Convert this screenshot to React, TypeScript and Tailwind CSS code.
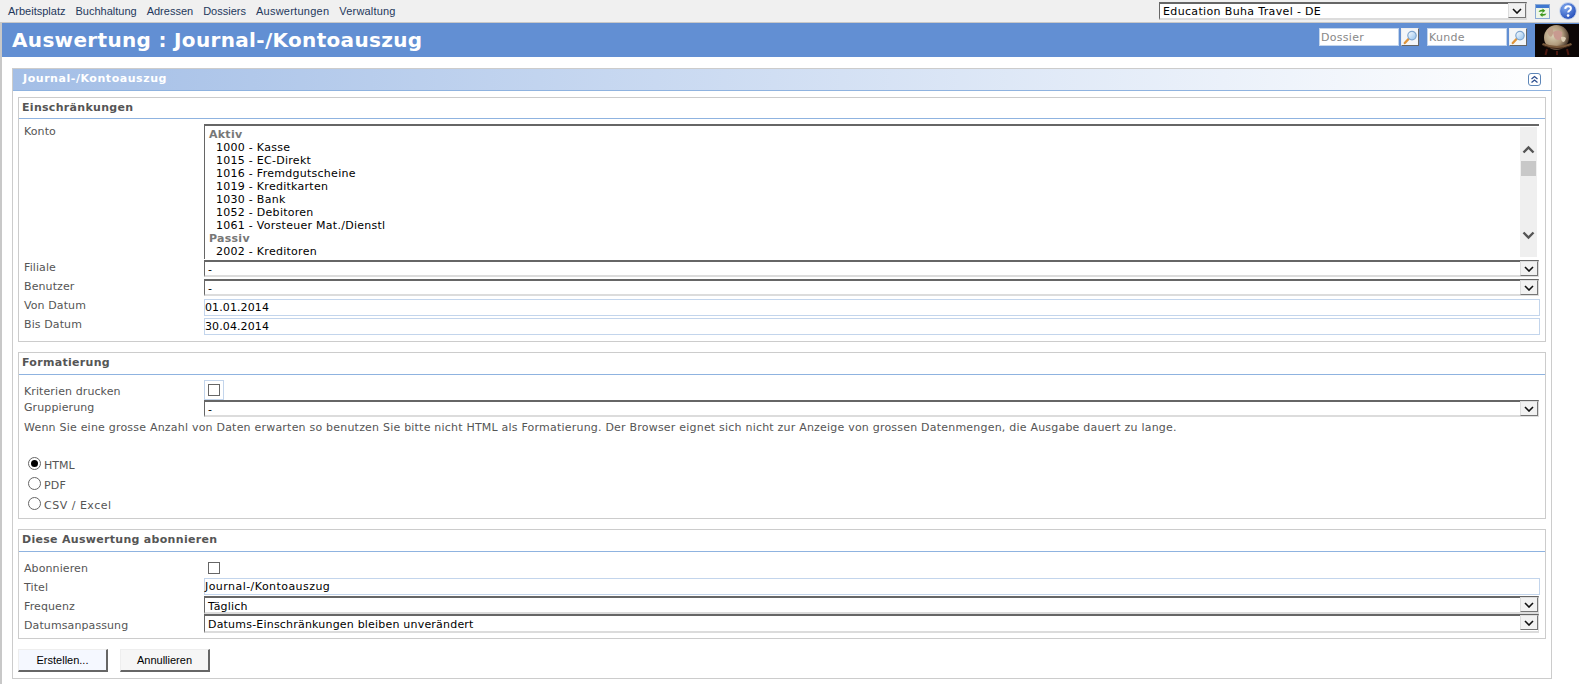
import React from "react";

const V = "font-['DejaVu_Sans','Liberation_Sans',sans-serif]";

function Chev() {
  return (
    <svg width="10" height="6" viewBox="0 0 10 6" className="block">
      <path d="M1 1 L5 5 L9 1" fill="none" stroke="#111" strokeWidth="1.6" />
    </svg>
  );
}

function Select({ value, h = "h-[17px]", w = "w-[1335px]", text = "tracking-[0.2px]", pt = "pt-[1px]" }: { value: string; h?: string; w?: string; text?: string; pt?: string }) {
  return (
    <div className={`${h} ${w} flex bg-white border-t-2 border-l border-b-2 border-r border-t-[#666] border-l-[#666] border-b-[#dcdcdc] border-r-[#dcdcdc] text-[11px] leading-[13px] text-black ${text}`}>
      <div className={`flex-1 pl-[3px] ${pt} overflow-hidden whitespace-nowrap`}>{value}</div>
      <div className="w-[18px] h-[15px] -mt-[1px] flex items-center justify-center bg-[#f2f2f2] border border-[#777] border-t-[#ddd] border-l-[#ddd]">
        <Chev />
      </div>
    </div>
  );
}

function TextInput({ value, text = "tracking-[0.1px]" }: { value: string; text?: string }) {
  return (
    <div className={`h-[17px] w-[1336px] border border-[#c3d5ec] bg-white text-[11px] leading-[15px] text-black whitespace-nowrap ${text}`}>
      {value}
    </div>
  );
}

function Row({ label, h, pt = "pt-0", children }: { label: string; h: string; pt?: string; children: React.ReactNode }) {
  return (
    <div className={`flex ${h}`}>
      <div className={`w-[185px] pl-[5px] ${pt} text-[11px] leading-[15px] text-[#555] tracking-[0.1px] whitespace-nowrap`}>{label}</div>
      <div className="flex flex-col">{children}</div>
    </div>
  );
}

function Fieldset({ title, head, className, children }: { title: string; head: string; className?: string; children: React.ReactNode }) {
  return (
    <section className={`w-[1528px] border border-[#cccccc] ${className ?? ""}`}>
      <div className={`${head} pl-[3px] border-b border-[#8fb3e0] flex items-center text-[11px] font-bold text-[#555] tracking-[0.3px] whitespace-nowrap`}>{title}</div>
      {children}
    </section>
  );
}

function Check() {
  return <span className="block w-[12px] h-[12px] bg-white border border-[#666]" />;
}

function Radio({ label, checked, text = "" }: { label: string; checked?: boolean; text?: string }) {
  return (
    <div className={`h-[20px] flex items-center pl-[9px] text-[11px] text-[#555] ${text}`}>
      <span className="w-[13px] h-[13px] mb-[5px] rounded-full border border-[#666] bg-white flex items-center justify-center mr-[3px]">
        {checked && <span className="w-[7px] h-[7px] rounded-full bg-black" />}
      </span>
      {label}
    </div>
  );
}

function Magnifier() {
  return (
    <svg width="15" height="15" viewBox="0 0 15 15">
      <defs>
        <linearGradient id="lens" x1="0" y1="0" x2="1" y2="1">
          <stop offset="0" stopColor="#ffffff" />
          <stop offset="1" stopColor="#8fc0ee" />
        </linearGradient>
      </defs>
      <path d="M5.5 9 L1.8 13" stroke="#e0953a" strokeWidth="2.4" strokeLinecap="round" />
      <circle cx="9" cy="5.6" r="4.2" fill="url(#lens)" stroke="#7fa6cf" strokeWidth="1.2" />
    </svg>
  );
}

function SearchBox({ placeholder }: { placeholder: string }) {
  return (
    <div className="flex items-start gap-[2px]">
      <input
        readOnly
        placeholder={placeholder}
        className="w-[80px] h-[18px] bg-white border border-[#c3d5ec] pl-[1px] text-[11px] tracking-[0.3px] outline-none placeholder:text-[#888] placeholder:opacity-100"
      />
      <div className="w-[18px] h-[18px] flex items-center justify-center bg-[#f4f6f8] border border-[#eee] border-r-[#666] border-b-[#666]">
        <Magnifier />
      </div>
    </div>
  );
}

function Globe() {
  return (
    <svg width="44" height="33" viewBox="0 0 44 33" className="block">
      <defs>
        <radialGradient id="gl" cx="0.36" cy="0.42" r="0.72">
          <stop offset="0" stopColor="#d9d0b4" />
          <stop offset="0.55" stopColor="#b09a7c" />
          <stop offset="1" stopColor="#2c1c14" />
        </radialGradient>
      </defs>
      <rect width="44" height="33" fill="#0c0605" />
      <circle cx="21.5" cy="13.5" r="12.5" fill="url(#gl)" />
      <path d="M12 6 q4 -3 6 -1 q1 4 -1 7 q-3 3 -5 -6z" fill="#bfa08a" />
      <path d="M18 8 q5 -3 9 0 q1 5 -3 8 q-5 1 -6 -8z" fill="#c89a90" />
      <path d="M26 13 q3 -1 5 1 q-1 4 -3 4 q-2 -1 -2 -5z" fill="#ddcdb4" />
      <path d="M8 19 q14 6 28 0 l1 2 q-15 7 -30 0z" fill="#7a5a3c" />
      <path d="M9 22 q13 5 26 0" fill="none" stroke="#3a2216" strokeWidth="1" />
      <path d="M12 25 L10.5 31 M32 25 L33.5 31 M22 27 L22 31" stroke="#4c170f" strokeWidth="2" />
    </svg>
  );
}

function Refresh() {
  return (
    <svg width="15" height="15" viewBox="0 0 15 15" className="block">
      <rect x="0.5" y="0.5" width="14" height="14" fill="#eef6e8" stroke="#8aa9d4" />
      <rect x="1" y="1" width="13" height="3" fill="#3f78d0" />
      <path d="M3.5 8 q1 -2.6 4 -2.2 l0 -1.3 l2.8 2.2 l-2.8 2.2 l0 -1.3 q-2 -0.2 -4 0.4z" fill="#3f9a1f" />
      <path d="M11.5 9.5 q-1 2.6 -4 2.2 l0 1.3 l-2.8 -2.2 l2.8 -2.2 l0 1.3 q2 0.2 4 -0.4z" fill="#3f9a1f" />
    </svg>
  );
}

function Help() {
  return (
    <svg width="18" height="18" viewBox="0 0 18 18" className="block">
      <defs>
        <radialGradient id="hp" cx="0.35" cy="0.3" r="0.8">
          <stop offset="0" stopColor="#7fa8ee" />
          <stop offset="1" stopColor="#1c45b4" />
        </radialGradient>
      </defs>
      <circle cx="9" cy="9" r="8.4" fill="url(#hp)" stroke="#d5dff0" />
      <path d="M6.2 6.8 q0.2 -2.6 2.9 -2.6 q2.8 0 2.8 2.3 q0 1.4 -1.5 2.2 q-1.2 0.7 -1.2 1.9" fill="none" stroke="#fff" strokeWidth="2" />
      <circle cx="9.1" cy="13.6" r="1.3" fill="#fff" />
    </svg>
  );
}

const accounts1 = [
  "1000 - Kasse",
  "1015 - EC-Direkt",
  "1016 - Fremdgutscheine",
  "1019 - Kreditkarten",
  "1030 - Bank",
  "1052 - Debitoren",
  "1061 - Vorsteuer Mat./Dienstl",
];

function KontoList() {
  return (
    <div className="h-[135px] w-[1335px] flex border-t-2 border-l border-t-[#666] border-l-[#666] bg-white">
      <div className="flex-1 overflow-hidden pl-[4px] pt-[2px] text-[11px] leading-[13px] text-black tracking-[0.27px] whitespace-nowrap">
        <div className="font-bold text-[#777]">Aktiv</div>
        {accounts1.map((a) => (
          <div key={a} className="pl-[7px]">{a}</div>
        ))}
        <div className="font-bold text-[#777]">Passiv</div>
        <div className="pl-[7px]">2002 - Kreditoren</div>
      </div>
      <div className="w-[17px] h-[130px] mt-[1px] mr-[2px] bg-[#efefef] flex flex-col items-center">
        <svg width="13" height="9" viewBox="0 0 13 9" className="mt-[18px] block">
          <path d="M1.5 7.5 L6.5 2.5 L11.5 7.5" fill="none" stroke="#555" strokeWidth="2.4" />
        </svg>
        <div className="w-[15px] h-[15px] mt-[7px] bg-[#c8c8c8]" />
        <svg width="13" height="9" viewBox="0 0 13 9" className="mt-[55px] block">
          <path d="M1.5 1.5 L6.5 6.5 L11.5 1.5" fill="none" stroke="#555" strokeWidth="2.4" />
        </svg>
      </div>
    </div>
  );
}

function Btn({ label, primary }: { label: string; primary?: boolean }) {
  return (
    <button className={`w-[90px] h-[23px] ${primary ? "bg-[#f5f8ff]" : "bg-[#f6f6f6]"} border border-[#eeeeee] border-r-2 border-b-2 border-r-[#666] border-b-[#666] text-[11px] text-black font-['Liberation_Sans',sans-serif]`}>
      {label}
    </button>
  );
}

export default function App() {
  return (
    <div className={`w-[1579px] h-[684px] overflow-hidden bg-white ${V}`}>
      <div className="h-[23px] bg-[#f0f0f0] border-b border-[#c8c8c8] flex items-center pl-[8px] pr-[2px]">
        <nav className="flex gap-[10px] text-[11px] text-[#24385c] font-['Liberation_Sans',sans-serif]">
          <span>Arbeitsplatz</span>
          <span>Buchhaltung</span>
          <span>Adressen</span>
          <span>Dossiers</span>
          <span className="tracking-[0.25px]">Auswertungen</span>
          <span className="tracking-[0.2px]">Verwaltung</span>
        </nav>
        <div className="ml-auto flex items-center">
          <Select value="Education Buha Travel - DE" h="h-[18px]" w="w-[368px]" text="tracking-[0.35px]" />
          <div className="ml-[8px]"><Refresh /></div>
          <div className="ml-[9px]"><Help /></div>
        </div>
      </div>
      <div className="border-l-2 border-[#c8c8c8] h-[661px]">
        <header className="h-[34px] bg-[#628fd3] flex justify-between pl-[10px]">
          <h1 className="text-[20px] leading-[34px] font-bold tracking-[0.33px] text-white whitespace-nowrap">Auswertung : Journal-/Kontoauszug</h1>
          <div className="flex items-start">
            <div className="mt-[5px]"><SearchBox placeholder="Dossier" /></div>
            <div className="ml-[8px] mt-[5px]"><SearchBox placeholder="Kunde" /></div>
            <div className="ml-[8px] mt-[1px]"><Globe /></div>
          </div>
        </header>
        <main className="ml-[10px] mt-[11px] w-[1540px] h-[611px] border border-[#cccccc]">
          <div className="h-[22px] bg-linear-to-r from-[#a3bee6] to-white border-b border-[#8fb3e0] flex items-center justify-between pl-[10px] pr-[10px] text-[11px] font-bold text-white">
            <span className="tracking-[0.55px]">Journal-/Kontoauszug</span>
            <span className="w-[13px] h-[13px] rounded-[3px] border border-[#5d86b8] bg-white flex items-center justify-center">
              <svg width="9" height="9" viewBox="0 0 9 9" className="block">
                <path d="M1.5 4 L4.5 1.5 L7.5 4 M1.5 7.5 L4.5 5 L7.5 7.5" fill="none" stroke="#2d4f8f" strokeWidth="1.3" />
              </svg>
            </span>
          </div>
          <div className="pl-[5px] pt-[6px]">
            <Fieldset title="Einschränkungen" head="h-[21px]">
              <div className="pt-[5px] pb-[6px]">
                <Row label="Konto" h="h-[135px]"><KontoList /></Row>
                <Row label="Filiale" h="h-[19px]" pt="pt-[1px]"><div className="mt-[1px]"><Select value="-" /></div></Row>
                <Row label="Benutzer" h="h-[19px]" pt="pt-[1px]"><div className="mt-[1px]"><Select value="-" /></div></Row>
                <Row label="Von Datum" h="h-[19px]" pt="pt-[1px]"><div className="mt-[2px]"><TextInput value="01.01.2014" /></div></Row>
                <Row label="Bis Datum" h="h-[19px]" pt="pt-[1px]"><div className="mt-[2px]"><TextInput value="30.04.2014" /></div></Row>
              </div>
            </Fieldset>
            <Fieldset title="Formatierung" head="h-[22px]" className="mt-[10px]">
              <div className="pt-[5px]">
                <div className="flex h-[20px]">
                  <div className="w-[185px] pl-[5px] pt-[4px] text-[11px] leading-[15px] text-[#555] tracking-[0.1px]">Kriterien drucken</div>
                  <div className="w-[20px] h-[20px] border border-[#c3d5ec] flex items-center justify-center"><Check /></div>
                </div>
                <Row label="Gruppierung" h="h-[17px]"><Select value="-" /></Row>
                <p className="pl-[5px] mt-[4px] h-[35px] text-[11px] leading-[14px] text-[#555] tracking-[0.21px] whitespace-nowrap">
                  Wenn Sie eine grosse Anzahl von Daten erwarten so benutzen Sie bitte nicht HTML als Formatierung. Der Browser eignet sich nicht zur Anzeige von grossen Datenmengen, die Ausgabe dauert zu lange.
                </p>
                <Radio label="HTML" checked />
                <Radio label="PDF" text="tracking-[0.2px]" />
                <Radio label="CSV / Excel" text="tracking-[0.5px]" />
                <div className="h-[2px]" />
              </div>
            </Fieldset>
            <Fieldset title="Diese Auswertung abonnieren" head="h-[22px]" className="mt-[10px]">
              <div className="pt-[8px] pb-[5px]">
                <div className="flex h-[18px]">
                  <div className="w-[185px] pl-[5px] pt-[1px] text-[11px] leading-[15px] text-[#555] tracking-[0.1px]">Abonnieren</div>
                  <div className="pl-[4px] pt-[2px]"><Check /></div>
                </div>
                <Row label="Titel" h="h-[18px]" pt="pt-[2px]"><TextInput value="Journal-/Kontoauszug" text="tracking-[0.45px]" /></Row>
                <Row label="Frequenz" h="h-[18px]" pt="pt-[3px]"><Select value="Täglich" h="h-[18px]" pt="pt-[2px]" /></Row>
                <Row label="Datumsanpassung" h="h-[19px]" pt="pt-[4px]"><Select value="Datums-Einschränkungen bleiben unverändert" h="h-[19px]" pt="pt-[2px]" /></Row>
              </div>
            </Fieldset>
            <div className="flex gap-[12px] mt-[10px]">
              <Btn label="Erstellen..." primary />
              <Btn label="Annullieren" />
            </div>
          </div>
        </main>
      </div>
    </div>
  );
}
